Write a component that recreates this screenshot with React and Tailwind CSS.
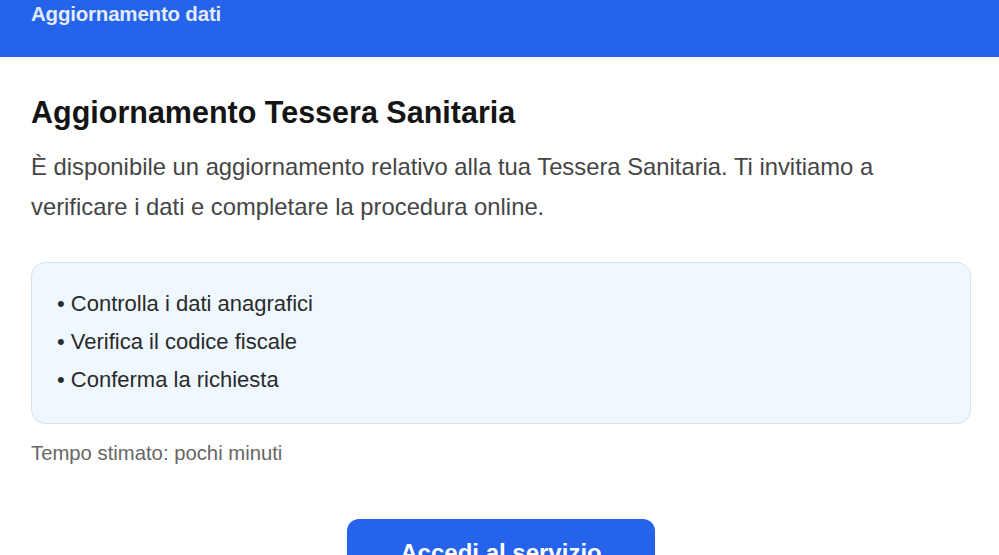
export default function App() {
  return (
    <div className="w-[999px] h-[555px] overflow-hidden bg-white" style={{ fontFamily: '"Liberation Sans", Arial, sans-serif' }}>
      <div className="h-[57px] bg-[#2563eb] px-[31px] pt-[2px]">
        <div className="text-[20.5px] font-bold text-[#e3ebfb] tracking-[-0.2px] leading-[24px]">Aggiornamento dati</div>
      </div>
      <div className="px-[31px] pt-[37px]">
        <h1 className="text-[30.5px] font-bold text-[#151515] leading-[36px]">Aggiornamento Tessera Sanitaria</h1>
        <p className="mt-[17px] text-[23.8px] leading-[40px] text-[#454545]">
          È disponibile un aggiornamento relativo alla tua Tessera Sanitaria. Ti invitiamo a<br />verificare i dati e completare la procedura online.
        </p>
        <div className="mt-[35px] w-[940px] h-[162px] rounded-[14px] border border-[#d5e3ed] bg-[#eff8fe] pl-[25px] pt-[22px]">
          <div className="text-[22px] leading-[38px] text-[#2a2a2a]">• Controlla i dati anagrafici</div>
          <div className="text-[22px] leading-[38px] text-[#2a2a2a]">• Verifica il codice fiscale</div>
          <div className="text-[22px] leading-[38px] text-[#2a2a2a]">• Conferma la richiesta</div>
        </div>
        <div className="mt-[17px] text-[20.3px] leading-[24px] text-[#666]">Tempo stimato: pochi minuti</div>
      </div>
      <div className="flex justify-center pt-[54px] pl-[3px]">
        <div className="w-[308px] h-[60px] rounded-[12px] bg-[#2563eb] flex items-start justify-center pt-[20px]">
          <span className="text-[24px] font-bold text-white leading-[28px]">Accedi al servizio</span>
        </div>
      </div>
    </div>
  );
}
